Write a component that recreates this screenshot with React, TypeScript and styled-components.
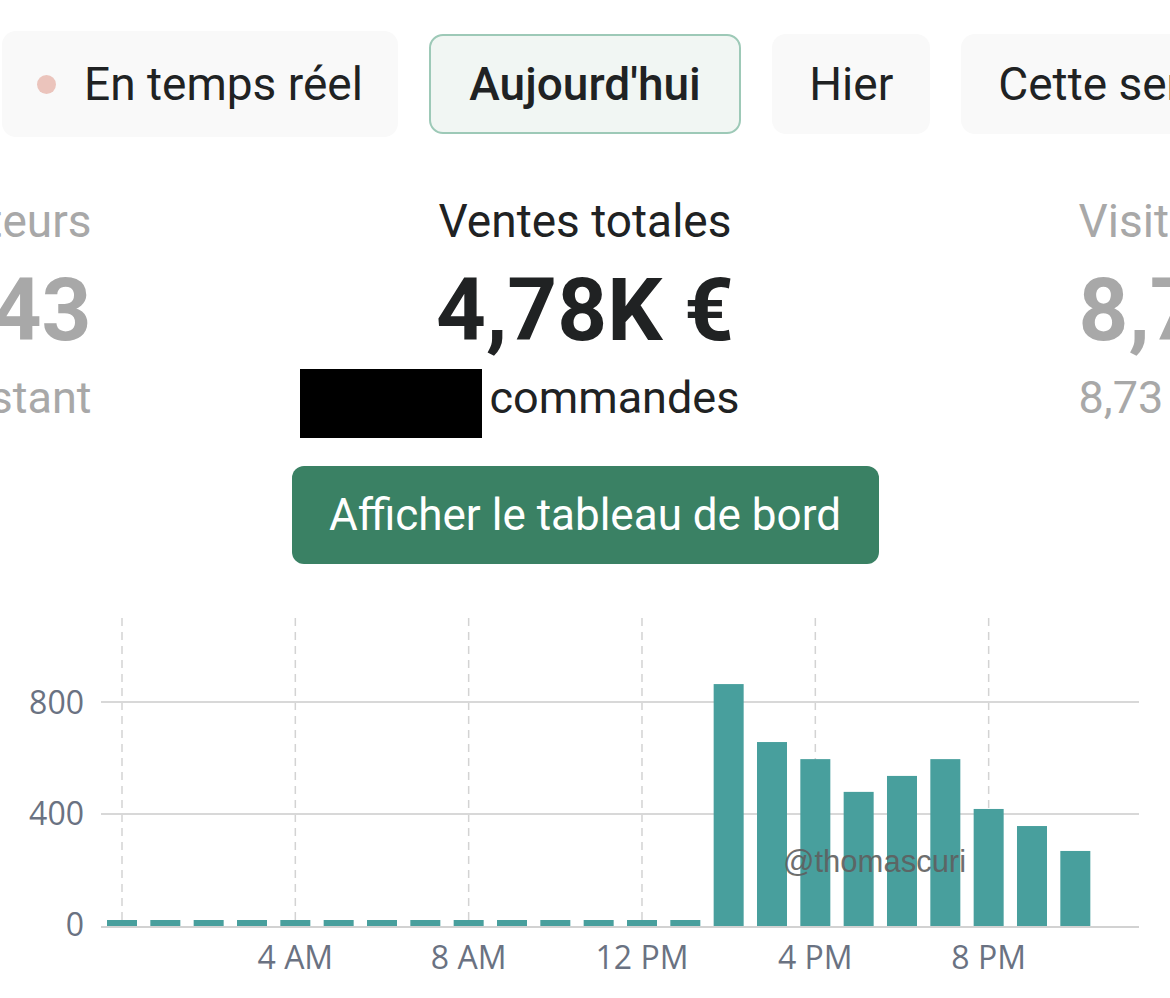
import React from "react";
import styled, { createGlobalStyle } from "styled-components";

const GlobalStyle = createGlobalStyle`
  html, body {
    margin: 0;
    padding: 0;
    background: #ffffff;
    overflow: hidden;
  }
  body {
    font-family: Roboto, "Noto Sans", Arial, sans-serif;
    color: #202223;
  }
`;

const HOURLY = [0, 0, 0, 0, 0, 0, 0, 0, 0, 0, 0, 0, 0, 0, 864, 657, 596, 479, 536, 596, 418, 357, 268];
const X_LABELS = ["4 AM", "8 AM", "12 PM", "4 PM", "8 PM"];

const App: React.FC = () => {
  return (
    <Page>
      <GlobalStyle />
      <TabsRow>
        <Tab $tall>
          <LiveDot />
          En temps réel
        </Tab>
        <Tab $active>Aujourd'hui</Tab>
        <Tab>Hier</Tab>
        <Tab>Cette semaine</Tab>
        <Tab>Ce mois-ci</Tab>
      </TabsRow>

      <Stats>
        <Stat $align="end" $muted>
          <StatTitle>Visiteurs</StatTitle>
          <StatValue>43</StatValue>
          <StatSub>
            <SubText>à l'instant</SubText>
          </StatSub>
        </Stat>

        <Stat $align="center">
          <StatTitle>Ventes totales</StatTitle>
          <StatValue>4,78K €</StatValue>
          <StatSub $offset>
            <Redacted />
            <SubText>commandes</SubText>
          </StatSub>
          <DashboardButton>Afficher le tableau de bord</DashboardButton>
        </Stat>

        <Stat $align="start" $muted>
          <StatTitle>Visites</StatTitle>
          <StatValue>8,7K</StatValue>
          <StatSub>
            <SubText>8,73 K visites</SubText>
          </StatSub>
        </Stat>
      </Stats>

      <SalesChart />
    </Page>
  );
};

const SalesChart: React.FC = () => {
  const base = 336;
  const scale = 0.28;
  const step = 43.333;
  const x0 = 122;

  return (
    <Chart width={1170} height={408} viewBox="0 0 1170 408">
      {[0, 1, 2, 3, 4, 5].map((k) => (
        <line
          key={k}
          x1={x0 + k * step * 4}
          x2={x0 + k * step * 4}
          y1={28}
          y2={base}
          stroke="#d3d3d3"
          strokeWidth={1.5}
          strokeDasharray="8 6"
        />
      ))}
      {[800, 400].map((v) => (
        <line key={v} x1={101} x2={1139} y1={base - v * scale} y2={base - v * scale} stroke="#d8d8d8" strokeWidth={2} />
      ))}
      {HOURLY.map((v, i) => {
        const h = Math.max(v * scale, 6);
        return <rect key={i} x={x0 + i * step - 15} y={base - h} width={30} height={h} fill="#489f9d" />;
      })}
      <line x1={101} x2={1139} y1={base + 1} y2={base + 1} stroke="#d2d2d2" strokeWidth={2} />

      <AxisText x={84} y={124} textAnchor="end">800</AxisText>
      <AxisText x={84} y={235} textAnchor="end">400</AxisText>
      <AxisText x={84} y={346} textAnchor="end">0</AxisText>
      {X_LABELS.map((label, k) => (
        <AxisText key={label} x={x0 + (k + 1) * step * 4} y={379} textAnchor="middle">
          {label}
        </AxisText>
      ))}

      <Watermark x={783} y={282}>@thomascuri</Watermark>
    </Chart>
  );
};

export default App;

const Page = styled.main`
  width: 1170px;
  height: 998px;
  overflow: hidden;
`;

const TabsRow = styled.nav`
  display: flex;
  align-items: center;
  gap: 31px;
  height: 106px;
  padding: 31px 0 0 2px;
  white-space: nowrap;
`;

const Tab = styled.button<{ $active?: boolean; $tall?: boolean }>`
  flex: none;
  display: flex;
  align-items: center;
  gap: 28px;
  box-sizing: border-box;
  height: ${(p) => (p.$tall ? 106 : 100)}px;
  padding: 0 ${(p) => (p.$active ? 38.5 : p.$tall ? 35 : 37)}px;
  border: ${(p) => (p.$active ? "2px solid #9dc9b7" : "none")};
  border-radius: 14px;
  background: ${(p) => (p.$active ? "#f1f6f3" : "#f9f9f9")};
  color: #202223;
  font-family: Roboto, "Noto Sans", sans-serif;
  font-size: 46px;
  font-weight: ${(p) => (p.$active ? 500 : 400)};
  line-height: 1;
  cursor: pointer;
`;

const LiveDot = styled.span`
  width: 19px;
  height: 19px;
  border-radius: 50%;
  background: #ebc4bc;
`;

const Stats = styled.section`
  display: grid;
  grid-template-columns: minmax(0, 1fr) 587px minmax(0, 1fr);
  column-gap: 200px;
  margin-top: 57px;
  width: 1170px;
`;

const Stat = styled.div<{ $align: "start" | "center" | "end"; $muted?: boolean }>`
  display: flex;
  flex-direction: column;
  align-items: ${(p) => (p.$align === "start" ? "flex-start" : p.$align === "end" ? "flex-end" : "center")};
  min-width: 0;
  color: ${(p) => (p.$muted ? "#a8a8a8" : "#202223")};
  white-space: nowrap;
`;

const StatTitle = styled.div`
  font-size: 46px;
  line-height: 54px;
`;

const StatValue = styled.div`
  margin-top: 12px;
  font-size: 87px;
  font-weight: 700;
  line-height: 100px;
`;

const StatSub = styled.div<{ $offset?: boolean }>`
  display: flex;
  align-items: flex-start;
  gap: 8px;
  margin-top: 9px;
  align-self: ${(p) => (p.$offset ? "stretch" : "auto")};
  padding-left: ${(p) => (p.$offset ? 8 : 0)}px;
`;

const SubText = styled.span`
  margin-top: 2px;
  font-size: 45px;
  line-height: 54px;
`;

const Redacted = styled.span`
  flex: none;
  width: 182px;
  height: 69px;
  background: #000000;
`;

const DashboardButton = styled.button`
  align-self: stretch;
  height: 98px;
  margin-top: 28px;
  border: none;
  border-radius: 12px;
  background: #3a8164;
  color: #ffffff;
  font-family: Roboto, "Noto Sans", sans-serif;
  font-size: 44px;
  font-weight: 400;
  cursor: pointer;
`;

const Chart = styled.svg`
  display: block;
  margin-top: 26px;
`;

const AxisText = styled.text`
  font-family: "Open Sans", "Noto Sans", sans-serif;
  font-size: 32px;
  fill: #6a7282;
`;

const Watermark = styled.text`
  font-family: "Liberation Sans", Arial, sans-serif;
  font-size: 31px;
  fill: #5f5f5f;
  opacity: 0.9;
`;
